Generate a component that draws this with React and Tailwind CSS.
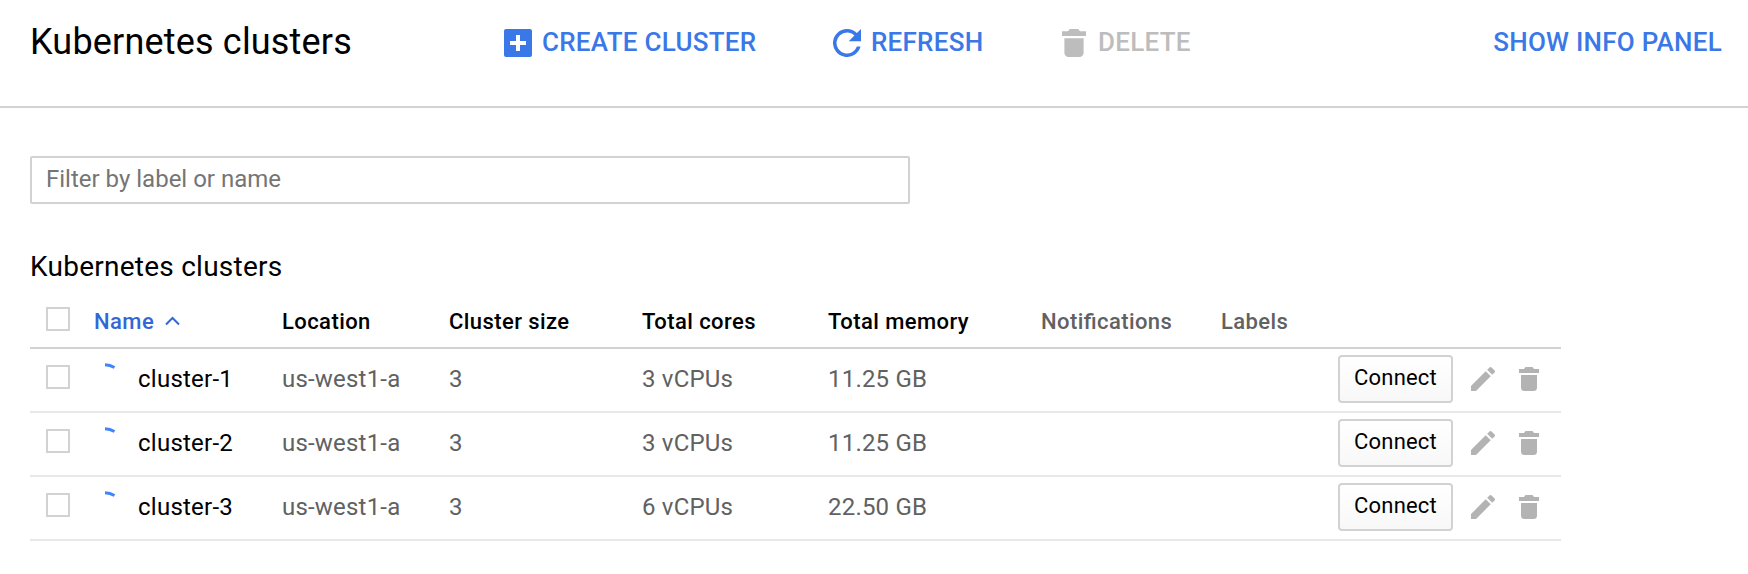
const clusters = [
  { name: 'cluster-1', location: 'us-west1-a', size: '3', cores: '3 vCPUs', memory: '11.25 GB' },
  { name: 'cluster-2', location: 'us-west1-a', size: '3', cores: '3 vCPUs', memory: '11.25 GB' },
  { name: 'cluster-3', location: 'us-west1-a', size: '3', cores: '6 vCPUs', memory: '22.50 GB' },
];

const grid = 'grid grid-cols-[64px_188px_167px_193px_186px_213px_180px_340px] w-[1531px] ml-[30px]';

function AddIcon() {
  return (
    <svg className="size-7 shrink-0" viewBox="0 0 28 28" fill="#3b78e7">
      <path fillRule="evenodd" d="M2 0h24a2 2 0 0 1 2 2v24a2 2 0 0 1-2 2H2a2 2 0 0 1-2-2V2a2 2 0 0 1 2-2zM12 6v6H6v4h6v6h4v-6h6v-4h-6V6z" />
    </svg>
  );
}

function RefreshIcon() {
  return (
    <svg className="size-7 shrink-0" viewBox="4 4 16 16" fill="#3b78e7">
      <path d="M17.65 6.35A7.96 7.96 0 0 0 12 4a8 8 0 1 0 7.73 10h-2.08A6 6 0 1 1 12 6c1.66 0 3.14.69 4.22 1.78L13 11h7V4z" />
    </svg>
  );
}

function TrashIcon({ className }) {
  return (
    <svg className={className} viewBox="0 0 20 24" preserveAspectRatio="none" fill="currentColor">
      <path d="M0 2h5l1.500-2h7L15 2h5v4H0zM2 8h16v12.500a3.500 3.500 0 0 1-3.500 3.500h-9A3.500 3.500 0 0 1 2 20.500z" />
    </svg>
  );
}

function PencilIcon() {
  return (
    <svg className="size-6" viewBox="3 3 18 18" fill="#b3b3b3">
      <path d="M3 17.250V21h3.750L17.810 9.940l-3.750-3.750zM20.710 7.040a1 1 0 0 0 0-1.410l-2.340-2.340a1 1 0 0 0-1.410 0l-1.830 1.830 3.750 3.750z" />
    </svg>
  );
}

function Spinner() {
  return (
    <svg className="w-8 h-8" viewBox="0 0 32 32" fill="none" stroke="#4285f4" strokeWidth="3">
      <path d="M11 3.700Q16 3.900 20.500 6.500" />
    </svg>
  );
}

function Checkbox() {
  return <div className="size-6 border-2 border-[#d2d2d2] bg-white" />;
}

export default function App() {
  return (
    <div className="w-[1748px] h-[574px] overflow-hidden bg-white text-black font-['Roboto',sans-serif]">
      <header className="h-[108px] border-b-2 border-[#d2d2d2]">
        <div className="flex h-[86px] items-center text-[26px] font-medium tracking-[0.25px] text-[#3b78e7] whitespace-nowrap">
          <h1 className="w-[474px] ml-[30px] pb-[2px] text-[36px] font-normal tracking-[0.18px] text-black">Kubernetes clusters</h1>
          <div className="flex items-center w-[329px]">
            <AddIcon />
            <span className="ml-[10px] pb-px">CREATE CLUSTER</span>
          </div>
          <div className="flex items-center w-[229px]">
            <RefreshIcon />
            <span className="ml-[10px] pb-px">REFRESH</span>
          </div>
          <div className="flex items-center text-[#bdbdbd]">
            <TrashIcon className="w-6 h-7" />
            <span className="ml-3 pb-px">DELETE</span>
          </div>
          <span className="ml-auto mr-[26px] pb-px">SHOW INFO PANEL</span>
        </div>
      </header>

      <div className="mt-12 ml-[30px] flex h-12 w-[880px] items-center rounded-[2px] border-2 border-[#d2d2d2] pl-[14px] pb-[3px] text-[24px] text-[#757575]">
        Filter by label or name
      </div>

      <h2 className="mt-[47px] ml-[30px] h-8 text-[28px] leading-8 tracking-[0.25px]">Kubernetes clusters</h2>

      <div className={`${grid} mt-2 h-[58px] border-b-2 border-[#d2d2d2] text-[22px] font-medium leading-[62px] whitespace-nowrap tracking-[0.42px]`}>
        <div className="pl-4 pt-4"><Checkbox /></div>
        <div className="flex items-start text-[#3367d6]">
          <span>Name</span>
          <svg className="ml-[11px] mt-[25px] h-[10px] w-[15px]" viewBox="0 0 15 10" fill="none" stroke="#3367d6" strokeWidth="2">
            <path d="M1 8.500 7.500 2 14 8.500" />
          </svg>
        </div>
        <div>Location</div>
        <div>Cluster size</div>
        <div>Total cores</div>
        <div>Total memory</div>
        <div className="text-[#616161] [font-feature-settings:'liga'_1]">Notifications</div>
        <div className="text-[#616161]">Labels</div>
      </div>

      {clusters.map((c) => (
        <div key={c.name} className={`${grid} h-16 border-b-2 border-[#e8e8e8] text-[24px] leading-[61px] tracking-[0.2px] text-[#616161] whitespace-nowrap`}>
          <div className="pl-4 pt-4"><Checkbox /></div>
          <div className="flex text-black tracking-[0.25px]">
            <div className="w-11 pt-3"><Spinner /></div>
            <span>{c.name}</span>
          </div>
          <div>{c.location}</div>
          <div>{c.size}</div>
          <div>{c.cores}</div>
          <div>{c.memory}</div>
          <div className="col-span-2 flex items-center justify-end pb-[2px] pr-[22px]">
            <button className="h-12 w-[115px] mr-[18px] rounded-[4px] border-2 border-[#d2d2d2] bg-linear-to-b from-white to-[#f8f8f8] pb-[2px] text-[22px] leading-10 tracking-[0.2px] text-black">Connect</button>
            <PencilIcon />
            <TrashIcon className="ml-6 h-6 w-5 text-[#b3b3b3]" />
          </div>
        </div>
      ))}
    </div>
  );
}
